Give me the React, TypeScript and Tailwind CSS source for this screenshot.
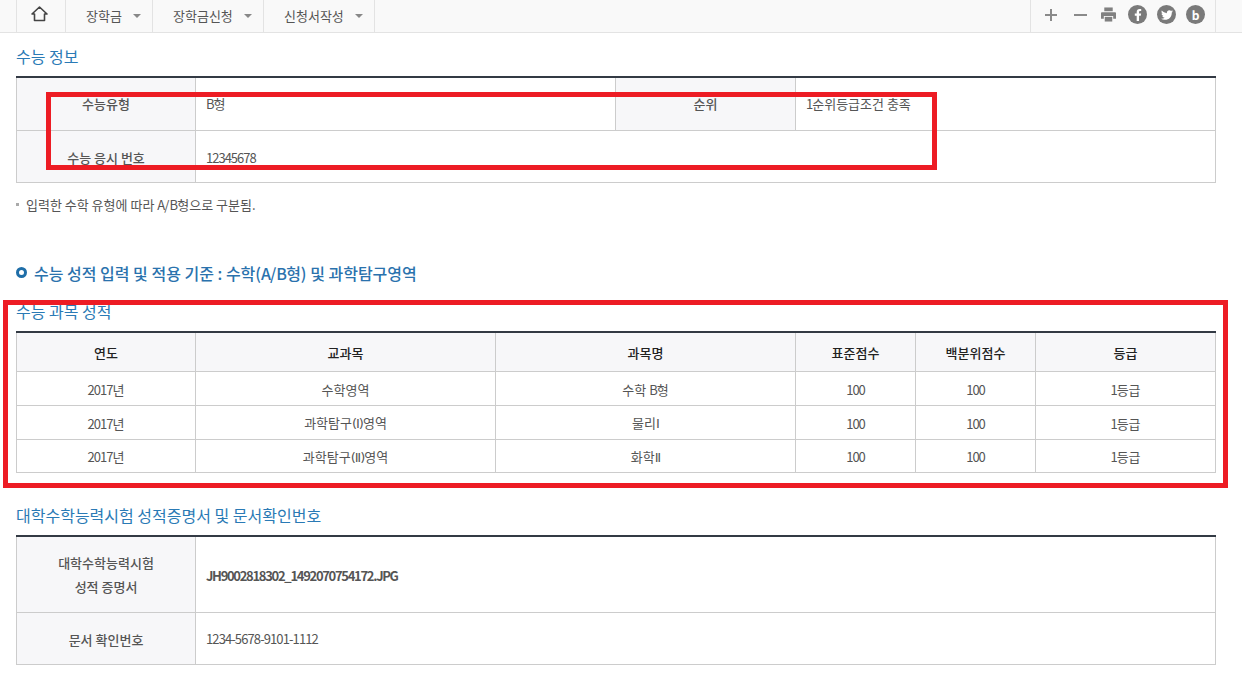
import React from "react";
import { FaFacebookF, FaTwitter } from "react-icons/fa";

const font = { fontFamily: '"Noto Sans CJK KR", "Noto Sans", sans-serif' };

function T({ text, tight = "tracking-[-1px]" }: { text: string; tight?: string }) {
  const parts = text.split(/(\(?[ⅠⅡ]\)?|[0-9A-Za-z\-_.]+)/).filter(Boolean);
  return (
    <>
      {parts.map((p, i) =>
        /[ⅠⅡ]/.test(p) ? (
          <span key={i} className="font-['DejaVu_Sans'] tracking-[-1px]">{p}</span>
        ) : /^[0-9A-Za-z\-_.]+$/.test(p) ? (
          <span key={i} className={tight}>{p}</span>
        ) : (
          <span key={i}>{p}</span>
        ),
      )}
    </>
  );
}

function NavItem({ label, w }: { label: string; w: string }) {
  return (
    <div className={`flex h-full items-center border-r border-[#e3e3e3] pb-[1px] pl-5 ${w}`}>
      <span className="text-[13px] text-[#555]">{label}</span>
      <span className="ml-[11px] h-0 w-0 border-x-[4px] border-t-[4px] border-x-transparent border-t-[#888]" />
    </div>
  );
}

function Heading({ children, cls }: { children: React.ReactNode; cls: string }) {
  return <h2 className={`text-[16px] leading-[24px] font-normal text-[#2a7ab5] ${cls}`}>{children}</h2>;
}

const th = "border border-[#cccccc] bg-[#f7f7f9] p-0 text-center text-[13px] font-medium text-[#555]";
const td = "border border-[#cccccc] p-0 pl-[10px] text-left text-[13px] text-[#555]";
const gh = "border border-[#cccccc] border-t-0 bg-[#f7f7f9] p-0 pt-[2px] text-center text-[13px] font-medium text-[#222]";
const gd = "border border-[#cccccc] p-0 pt-[2px] text-center text-[13px] text-[#555]";

const rows = [
  ["2017년", "수학영역", "수학 B형"],
  ["2017년", "과학탐구(Ⅰ)영역", "물리Ⅰ"],
  ["2017년", "과학탐구(Ⅱ)영역", "화학Ⅱ"],
];

export default function App() {
  return (
    <div className="relative h-[680px] w-[1242px] overflow-hidden bg-white" style={font}>
      <header className="flex h-[33px] border-b border-[#e3e3e3] bg-[#f9f9f9] pl-4">
        <div className="flex h-full w-[50px] items-center justify-center border-x border-[#e3e3e3] pr-[4px] pb-[4px]">
          <svg width="17" height="16" viewBox="0 0 17 16" fill="none" stroke="#444" strokeWidth="1.6">
            <path d="M1 8 L8.5 1 L16 8 H13.5 V14.5 H3.5 V8 Z" strokeLinejoin="round" />
          </svg>
        </div>
        <NavItem label="장학금" w="w-[87px]" />
        <NavItem label="장학금신청" w="w-[111px]" />
        <NavItem label="신청서작성" w="w-[111px]" />
        <div className="flex-1" />
        <div className="mr-[26px] flex h-full w-[186px] items-center border-x border-[#e3e3e3] pb-[3px] pl-[14px]">
          <svg width="12" height="12" viewBox="0 0 12 12" fill="#8a8a8a" className="mr-[17px]">
            <rect x="0" y="5" width="12" height="2" />
            <rect x="5" y="0" width="2" height="12" />
          </svg>
          <svg width="13" height="12" viewBox="0 0 13 12" fill="#8a8a8a" className="mr-[14px]">
            <rect x="0" y="5" width="13" height="2" />
          </svg>
          <svg width="15" height="15" viewBox="0 0 16 15" fill="#808080" className="mr-[12px]">
            <rect x="3.5" y="0" width="9" height="4" />
            <path d="M0 6 Q0 5 1 5 H15 Q16 5 16 6 V12 H13 V9 H3 V12 H0 Z" />
            <rect x="4" y="10" width="8" height="5" />
          </svg>
          <span className="mr-[10px] flex h-[19px] w-[19px] items-center justify-center rounded-full bg-[#7a7a7a] text-white">
            <FaFacebookF size={12} />
          </span>
          <span className="mr-[10px] flex h-[19px] w-[19px] items-center justify-center rounded-full bg-[#7a7a7a] text-white">
            <FaTwitter size={12} />
          </span>
          <span className="flex h-[19px] w-[19px] items-center justify-center rounded-full bg-[#7a7a7a] text-[12px] leading-none font-bold text-white">
            b
          </span>
        </div>
      </header>

      <main className="pl-4">
        <Heading cls="mt-[11px]">수능 정보</Heading>
        <table className="mt-[8px] w-[1199px] table-fixed border-collapse border-t-2 border-t-[#333a44]">
          <colgroup>
            <col className="w-[179px]" />
            <col className="w-[420px]" />
            <col className="w-[180px]" />
            <col className="w-[420px]" />
          </colgroup>
          <tbody>
            <tr className="h-[53px]">
              <th className={th}>수능유형</th>
              <td className={td}><T text="B형" /></td>
              <th className={th}>순위</th>
              <td className={td}><T text="1순위등급조건 충족" /></td>
            </tr>
            <tr className="h-[52px]">
              <th className={`${th} pt-[3px]`}>수능 응시 번호</th>
              <td className={`${td} pt-[3px]`} colSpan={3}><T text="12345678" /></td>
            </tr>
          </tbody>
        </table>
        <p className="mt-[13px] flex h-[18px] items-center text-[13px] text-[#555]">
          <span className="mr-[7px] h-[3px] w-[3px] bg-[#aaa]" />
          <span><T text="입력한 수학 유형에 따라 A/B형으로 구분됨." tight="tracking-[-0.8px]" /></span>
        </p>
        <h3 className="mt-[47px] flex h-[24px] items-center text-[16px] font-medium text-[#2a72ad]">
          <span className="mr-[7px] h-[11px] w-[11px] rounded-full border-[3px] border-[#1f6ea8]" />
          <span><T text="수능 성적 입력 및 적용 기준 : 수학(A/B형) 및 과학탐구영역" tight="tracking-[-0.9px]" /></span>
        </h3>
        <Heading cls="mt-[14px]">수능 과목 성적</Heading>
        <table className="mt-[8px] w-[1199px] table-fixed border-collapse border-t-2 border-t-[#333a44]">
          <colgroup>
            <col className="w-[179px]" />
            <col className="w-[300px]" />
            <col className="w-[300px]" />
            <col className="w-[120px]" />
            <col className="w-[120px]" />
            <col className="w-[180px]" />
          </colgroup>
          <thead>
            <tr className="h-[40px]">
              {["연도", "교과목", "과목명", "표준점수", "백분위점수", "등급"].map((h) => (
                <th key={h} className={gh}>{h}</th>
              ))}
            </tr>
          </thead>
          <tbody>
            {rows.map((r, i) => (
              <tr key={i} className={i === 2 ? "h-[33px]" : "h-[34px]"}>
                {r.map((c, j) => (
                  <td key={j} className={gd}><T text={c} /></td>
                ))}
                <td className={gd}><T text="100" /></td>
                <td className={gd}><T text="100" /></td>
                <td className={gd}><T text="1등급" /></td>
              </tr>
            ))}
          </tbody>
        </table>
        <Heading cls="mt-[30px]">대학수학능력시험 성적증명서 및 문서확인번호</Heading>
        <table className="mt-[8px] w-[1199px] table-fixed border-collapse border-t-2 border-t-[#333a44]">
          <colgroup>
            <col className="w-[179px]" />
            <col className="w-[1020px]" />
          </colgroup>
          <tbody>
            <tr className="h-[76px]">
              <th className={`${th} pt-[2px]`}>
                <div className="leading-[24px]">대학수학능력시험<br />성적 증명서</div>
              </th>
              <td className={`${td} pt-[2px] font-semibold text-[#333]`}>
                <T text="JH9002818302_1492070754172.JPG" tight="tracking-[-1.3px]" />
              </td>
            </tr>
            <tr className="h-[52px]">
              <th className={`${th} pt-[3px]`}>문서 확인번호</th>
              <td className={`${td} pt-[2px]`}><T text="1234-5678-9101-1112" tight="tracking-[-0.9px]" /></td>
            </tr>
          </tbody>
        </table>
      </main>

      <div className="absolute top-[92px] left-[46px] h-[78px] w-[891px] border-[5px] border-[#ed1c24]" />
      <div className="absolute top-[300px] left-[3px] h-[188px] w-[1225px] border-[5px] border-[#ed1c24]" />
    </div>
  );
}
